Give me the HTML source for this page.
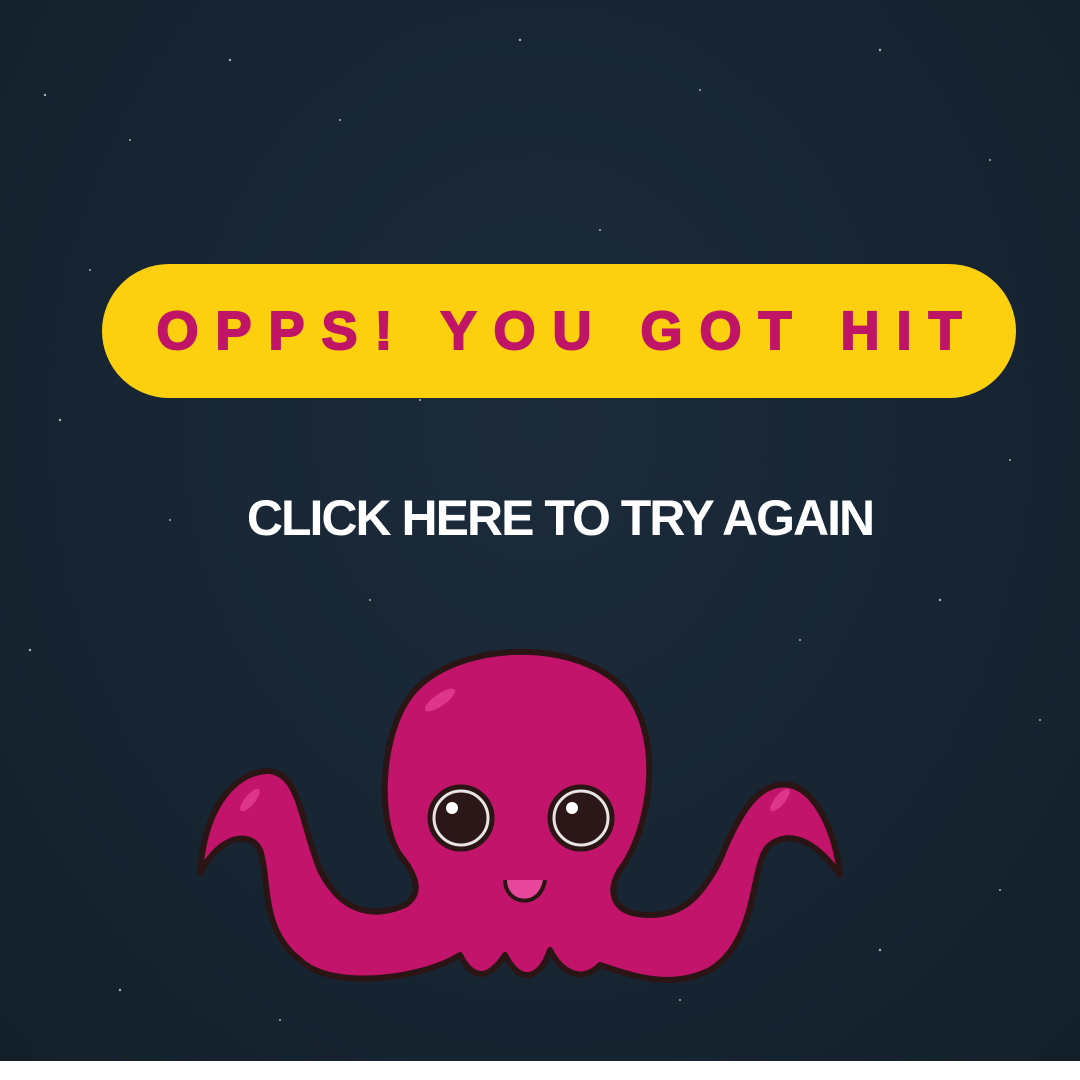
<!DOCTYPE html>
<html><head><meta charset="utf-8"><style>
html,body{margin:0;padding:0;width:1080px;height:1080px;overflow:hidden;background:#fff}
.bg{position:absolute;left:0;top:0;width:1080px;height:1061px;background:radial-gradient(ellipse at 50% 40%,#1c2b3a 0%,#172533 60%,#132029 100%)}
.pill{position:absolute;left:102px;top:264px;width:914px;height:134px;border-radius:67px;background:#fcd00f}
.pill span{position:absolute;left:0;right:0;top:36px;text-align:center;white-space:nowrap;font:bold 54px/62px "Liberation Sans",sans-serif;color:#c01467;letter-spacing:17px;padding-left:17px;-webkit-text-stroke:2px #c01467}
.cta{position:absolute;left:0;width:1120px;top:488px;text-align:center;white-space:nowrap;font:bold 50px/60px "Liberation Sans",sans-serif;color:#fff;letter-spacing:-2px}
svg{position:absolute;left:0;top:0}
</style></head><body>
<div class="bg"></div>
<svg width="1080" height="1061">
<g fill="#cfd8e0" opacity=".8">
<circle cx="45" cy="95" r="1.2"/><circle cx="130" cy="140" r="1"/><circle cx="230" cy="60" r="1.2"/><circle cx="340" cy="120" r="1"/><circle cx="520" cy="40" r="1.2"/><circle cx="700" cy="90" r="1"/><circle cx="880" cy="50" r="1.2"/><circle cx="990" cy="160" r="1"/><circle cx="60" cy="420" r="1.2"/><circle cx="170" cy="520" r="1"/><circle cx="30" cy="650" r="1.2"/><circle cx="1010" cy="460" r="1"/><circle cx="940" cy="600" r="1.2"/><circle cx="1040" cy="720" r="1"/><circle cx="880" cy="950" r="1.2"/><circle cx="120" cy="990" r="1.2"/><circle cx="280" cy="1020" r="1"/><circle cx="680" cy="1000" r="1"/><circle cx="760" cy="860" r="1.2"/><circle cx="1000" cy="890" r="1"/><circle cx="370" cy="600" r="1"/><circle cx="800" cy="640" r="1"/><circle cx="600" cy="230" r="1"/><circle cx="420" cy="400" r="1"/><circle cx="300" cy="880" r="1"/><circle cx="90" cy="270" r="1"/></g>
<g stroke="#2a1414" stroke-width="6" stroke-linejoin="round">
<path fill="#c2146a" d="M200,873 C205,800 240,770 270,771 C300,775 300,820 320,870 C340,910 370,920 405,905 C420,895 420,880 400,855 C375,820 380,720 420,685 C470,640 580,640 625,690 C665,740 650,830 620,870 C605,895 615,915 650,915 C680,915 700,900 720,860 C740,810 760,780 790,785 C815,790 835,830 840,875 C815,840 790,830 770,845 C750,860 760,940 710,970 C670,990 630,975 600,965 C580,985 560,970 550,950 C540,980 520,985 505,955 C485,985 470,975 460,955 C420,980 330,990 300,960 C260,930 270,880 260,850 C250,830 220,835 200,873 Z"/>
</g>
<g fill="#e8469a" opacity=".7">
<ellipse cx="440" cy="700" rx="18" ry="6" transform="rotate(-35 440 700)"/>
<ellipse cx="250" cy="800" rx="14" ry="5" transform="rotate(-50 250 800)"/>
<ellipse cx="780" cy="800" rx="14" ry="5" transform="rotate(-50 780 800)"/>
</g>
<g stroke="#2a1414" stroke-width="5">
<circle cx="461" cy="818" r="31" fill="#2b1717"/>
<circle cx="581" cy="818" r="31" fill="#2b1717"/>
</g>
<circle cx="461" cy="818" r="27" fill="none" stroke="#e8e4e4" stroke-width="3"/>
<circle cx="581" cy="818" r="27" fill="none" stroke="#e8e4e4" stroke-width="3"/>
<circle cx="452" cy="808" r="6" fill="#fff"/><circle cx="572" cy="808" r="6" fill="#fff"/>
<path d="M505,880 C505,905 540,910 545,880" fill="#e8469a" stroke="#2a1414" stroke-width="4"/>
</svg>
<div class="pill"><span>OPPS! YOU GOT HIT</span></div>
<div class="cta">CLICK HERE TO TRY AGAIN</div>
</body></html>
